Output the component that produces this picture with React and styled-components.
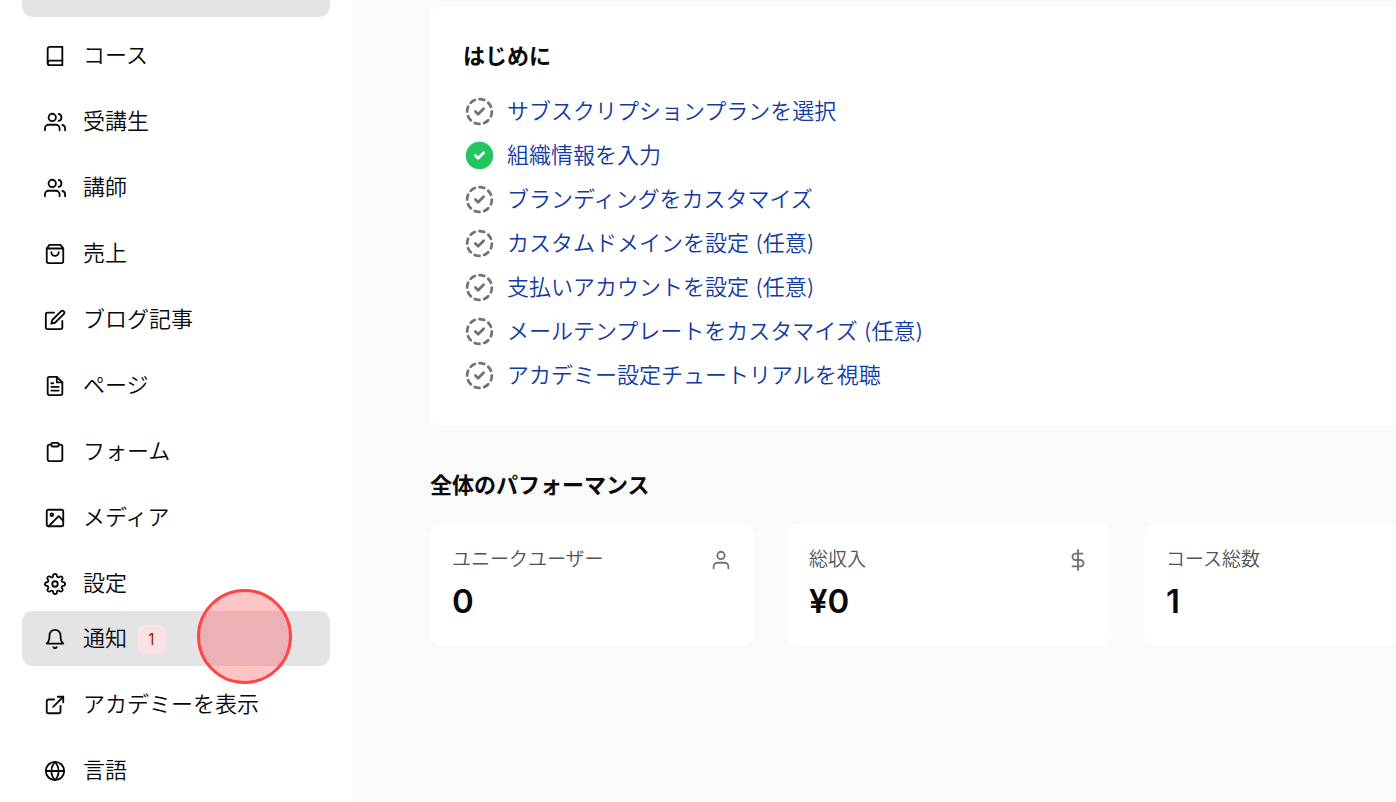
import React from 'react';
import styled, { createGlobalStyle } from 'styled-components';
import {
  FiBell,
  FiBook,
  FiClipboard,
  FiDollarSign,
  FiEdit,
  FiExternalLink,
  FiFileText,
  FiGlobe,
  FiImage,
  FiSettings,
  FiShoppingBag,
  FiUser,
  FiUsers,
} from 'react-icons/fi';

const MAIN_MENUS = [
  { label: 'コース', icon: FiBook },
  { label: '受講生', icon: FiUsers },
  { label: '講師', icon: FiUsers },
  { label: '売上', icon: FiShoppingBag },
  { label: 'ブログ記事', icon: FiEdit },
  { label: 'ページ', icon: FiFileText },
  { label: 'フォーム', icon: FiClipboard },
  { label: 'メディア', icon: FiImage },
  { label: '設定', icon: FiSettings },
];

const SUB_MENUS = [
  { label: '通知', icon: FiBell, badge: 1, active: true },
  { label: 'アカデミーを表示', icon: FiExternalLink },
  { label: '言語', icon: FiGlobe },
];

const STEPS = [
  { label: 'サブスクリプションプランを選択', done: false },
  { label: '組織情報を入力', done: true },
  { label: 'ブランディングをカスタマイズ', done: false },
  { label: 'カスタムドメインを設定 (任意)', done: false },
  { label: '支払いアカウントを設定 (任意)', done: false },
  { label: 'メールテンプレートをカスタマイズ (任意)', done: false },
  { label: 'アカデミー設定チュートリアルを視聴', done: false },
];

const STATS = [
  { label: 'ユニークユーザー', value: '0', icon: FiUser },
  { label: '総収入', value: '¥0', icon: FiDollarSign },
  { label: 'コース総数', value: '1', icon: FiBook },
];

function StepIcon({ done }) {
  if (done) {
    return (
      <StepSvg viewBox='0 0 24 24' $color='#22c55e' aria-hidden='true'>
        <circle cx='12' cy='12' r='10' fill='currentColor' stroke='none' />
        <path d='M9 12l2 2l4 -4' stroke='#fff' />
      </StepSvg>
    );
  }
  return (
    <StepSvg viewBox='0 0 24 24' $color='#71717a' aria-hidden='true'>
      <path d='M8.56 3.69a9 9 0 0 0 -2.92 1.95' />
      <path d='M3.69 8.56a9 9 0 0 0 -.69 3.44' />
      <path d='M3.69 15.44a9 9 0 0 0 1.95 2.92' />
      <path d='M8.56 20.31a9 9 0 0 0 3.44 .69' />
      <path d='M15.44 20.31a9 9 0 0 0 2.92 -1.95' />
      <path d='M20.31 15.44a9 9 0 0 0 .69 -3.44' />
      <path d='M20.31 8.56a9 9 0 0 0 -1.95 -2.92' />
      <path d='M15.44 3.69a9 9 0 0 0 -3.44 -.69' />
      <path d='M9 12l2 2l4 -4' />
    </StepSvg>
  );
}

function MenuItem({ menu }) {
  const Icon = menu.icon;

  return (
    <li>
      <MenuLink href='#' $active={menu.active}>
        <Icon size={22} aria-hidden='true' />
        <MenuLabel>
          {menu.label}
          {menu.badge && <Badge>{menu.badge}</Badge>}
        </MenuLabel>
        {menu.active && <ClickMarker />}
      </MenuLink>
    </li>
  );
}

export default function App() {
  return (
    <>
      <GlobalStyle />
      <Layout>
        <Sidebar>
          <ScrolledItem />
          <nav>
            <MenuList>
              {MAIN_MENUS.map((menu) => (
                <MenuItem key={menu.label} menu={menu} />
              ))}
            </MenuList>
            <MenuList>
              {SUB_MENUS.map((menu) => (
                <MenuItem key={menu.label} menu={menu} />
              ))}
            </MenuList>
          </nav>
        </Sidebar>
        <Main>
          <StartCard>
            <Title>はじめに</Title>
            <StepList>
              {STEPS.map((step) => (
                <Step key={step.label}>
                  <StepIcon done={step.done} />
                  <StepLink href='#'>{step.label}</StepLink>
                </Step>
              ))}
            </StepList>
          </StartCard>
          <Performance>
            <Title>全体のパフォーマンス</Title>
            <StatGrid>
              {STATS.map(({ label, value, icon: Icon }) => (
                <StatCard key={label}>
                  <StatHead>
                    <h3>{label}</h3>
                    <Icon size={22} aria-hidden='true' />
                  </StatHead>
                  <StatValue>{value}</StatValue>
                </StatCard>
              ))}
            </StatGrid>
          </Performance>
        </Main>
      </Layout>
    </>
  );
}

const GlobalStyle = createGlobalStyle`
  * {
    box-sizing: border-box;
    margin: 0;
    padding: 0;
  }
  body {
    background-color: #fff;
    color: #09090b;
    font-family: Inter, 'Noto Sans CJK JP', sans-serif;
    font-size: 22px;
    font-weight: 350;
    line-height: 33px;
  }
  ul {
    list-style: none;
  }
  a {
    color: inherit;
    text-decoration: none;
  }
`;

const Layout = styled.div`
  display: flex;
  height: 100vh;
  overflow: hidden;
`;

const Sidebar = styled.aside`
  flex: 0 0 352px;
  padding: 0 22px;
  background-color: #fff;
`;

// スクロールで下端だけ見えているメニュー
const ScrolledItem = styled.div`
  height: 17px;
  margin-bottom: 11px;
  border-radius: 0 0 11px 11px;
  background-color: #e4e4e7;
`;

const MenuList = styled.ul`
  display: flex;
  flex-direction: column;
  gap: 11px;
`;

const MenuLink = styled.a`
  position: relative;
  display: flex;
  align-items: center;
  gap: 17px;
  height: 55px;
  padding: 0 22px;
  border-radius: 11px;
  background-color: ${(props) => (props.$active ? '#e4e4e7' : 'transparent')};
  svg {
    flex-shrink: 0;
  }
`;

const MenuLabel = styled.span`
  display: flex;
  align-items: center;
  gap: 11px;
`;

const Badge = styled.span`
  padding: 0 10px;
  border-radius: 6px;
  background-color: #fee2e2;
  color: #991b1b;
  font-size: 16px;
  font-weight: 400;
  line-height: 28px;
`;

const ClickMarker = styled.span`
  position: absolute;
  top: -22px;
  left: 175px;
  width: 95px;
  height: 95px;
  border: 3px solid #ff4545;
  border-radius: 50%;
  background-color: rgba(255, 70, 70, 0.32);
`;

const Main = styled.main`
  flex: 1;
  min-width: 0;
  display: grid;
  grid-template-columns: minmax(max-content, 1fr);
  align-content: start;
  gap: 44px;
  padding: 7px 0 0 78px;
  overflow: hidden;
  background-color: #fafafa;
`;

const StartCard = styled.section`
  display: flex;
  flex-direction: column;
  gap: 22px;
  padding: 33px;
  border-radius: 11px;
  background-color: #fff;
`;

const Title = styled.h2`
  font-size: 22px;
  font-weight: 600;
`;

const StepList = styled.ul`
  display: flex;
  flex-direction: column;
  gap: 11px;
`;

const Step = styled.li`
  display: flex;
  align-items: center;
  gap: 11px;
`;

const StepSvg = styled.svg`
  width: 33px;
  height: 33px;
  fill: none;
  stroke: currentColor;
  stroke-width: 2;
  stroke-linecap: round;
  stroke-linejoin: round;
  color: ${(props) => props.$color};
`;

const StepLink = styled.a`
  && {
    color: #113aa3;
  }
`;

const Performance = styled.section`
  display: flex;
  flex-direction: column;
  gap: 22px;
`;

const StatGrid = styled.div`
  display: grid;
  grid-template-columns: repeat(3, minmax(324px, 1fr));
  gap: 33px;
`;

const StatCard = styled.article`
  padding: 22px;
  border-radius: 11px;
  background-color: #fff;
`;

const StatHead = styled.div`
  display: flex;
  align-items: center;
  justify-content: space-between;
  color: #71717a;
  h3 {
    color: #52525b;
    font-size: 19px;
    font-weight: 350;
    line-height: 27px;
  }
`;

const StatValue = styled.p`
  margin-top: 6px;
  font-size: 33px;
  font-weight: 600;
  line-height: 44px;
`;
